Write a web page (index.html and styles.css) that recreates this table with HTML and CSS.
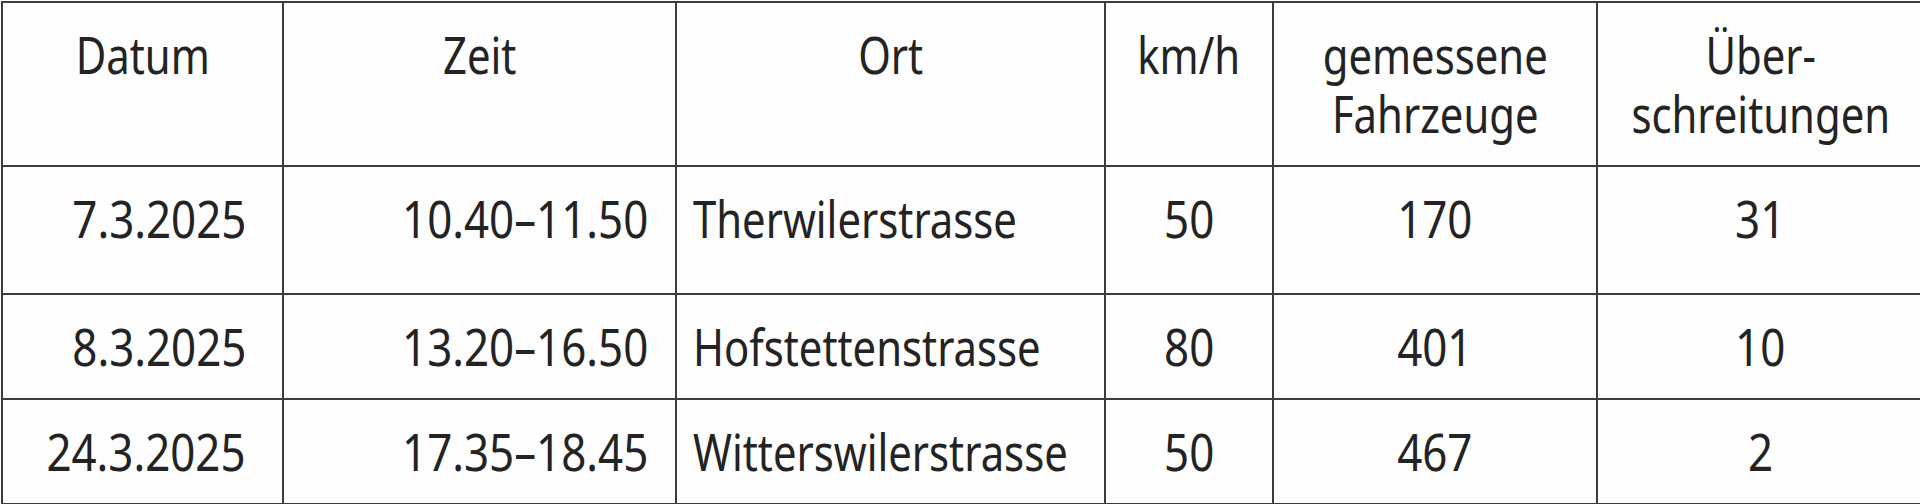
FILE: index.html
```html
<!DOCTYPE html>
<html lang="de">
<head>
<meta charset="utf-8">
<title>Geschwindigkeitsmessungen</title>
<link rel="stylesheet" href="styles.css">
</head>
<body>
<table class="messungen">
  <colgroup>
    <col class="c-datum">
    <col class="c-zeit">
    <col class="c-ort">
    <col class="c-kmh">
    <col class="c-fz">
    <col class="c-ueb">
  </colgroup>
  <thead>
    <tr class="head">
      <th><span class="t">Datum</span></th>
      <th><span class="t">Zeit</span></th>
      <th><span class="t">Ort</span></th>
      <th><span class="t">km/h</span></th>
      <th><span class="t">gemessene<br>Fahrzeuge</span></th>
      <th><span class="t">Über-<br>schreitungen</span></th>
    </tr>
  </thead>
  <tbody>
    <tr class="row tall">
      <td class="datum"><span class="t">7.3.2025</span></td>
      <td class="zeit"><span class="t">10.40–11.50</span></td>
      <td class="ort"><span class="t">Therwilerstrasse</span></td>
      <td class="num"><span class="t">50</span></td>
      <td class="num"><span class="t">170</span></td>
      <td class="num"><span class="t">31</span></td>
    </tr>
    <tr class="row">
      <td class="datum"><span class="t">8.3.2025</span></td>
      <td class="zeit"><span class="t">13.20–16.50</span></td>
      <td class="ort"><span class="t">Hofstettenstrasse</span></td>
      <td class="num"><span class="t">80</span></td>
      <td class="num"><span class="t">401</span></td>
      <td class="num"><span class="t">10</span></td>
    </tr>
    <tr class="row">
      <td class="datum"><span class="t">24.3.2025</span></td>
      <td class="zeit"><span class="t">17.35–18.45</span></td>
      <td class="ort"><span class="t">Witterswilerstrasse</span></td>
      <td class="num"><span class="t">50</span></td>
      <td class="num"><span class="t">467</span></td>
      <td class="num"><span class="t">2</span></td>
    </tr>
  </tbody>
</table>
</body>
</html>
```
FILE: styles.css
```css
html, body {
  margin: 0;
  padding: 0;
  background: #fdfdfd;
}

body {
  width: 1920px;
  height: 504px;
  overflow: hidden;
}

.messungen {
  border-collapse: collapse;
  table-layout: fixed;
  width: 1922px;
  margin-left: 1px;
  margin-top: 1px;
  font-family: "Noto Sans", "Open Sans", sans-serif;
  font-size: 51px;
  line-height: 59px;
  color: #232323;
}

.c-datum { width: 281px; }
.c-zeit  { width: 393px; }
.c-ort   { width: 429px; }
.c-kmh   { width: 168px; }
.c-fz    { width: 324px; }
.c-ueb   { width: 327px; }

.messungen th,
.messungen td {
  border: 2px solid #3c3c3c;
  vertical-align: top;
  padding: 22px 0 0 0;
  white-space: nowrap;
  overflow: visible;
}

.messungen th {
  font-weight: normal;
  text-align: center;
  height: 140px;
}

.t {
  display: inline-block;
  transform: scaleX(0.82);
  transform-origin: center top;
}

.row td {
  height: 81px;
}

.row.tall td {
  height: 104px;
}

.datum {
  text-align: right;
  padding-right: 36px !important;
}

.zeit {
  text-align: right;
  padding-right: 27px !important;
}

.datum .t,
.zeit .t {
  transform: scaleX(0.86);
  transform-origin: right top;
}

.ort {
  text-align: left;
  padding-left: 16px !important;
}

.ort .t {
  transform-origin: left top;
}

.num {
  text-align: center;
}

.num .t {
  transform: scaleX(0.86);
}
```
